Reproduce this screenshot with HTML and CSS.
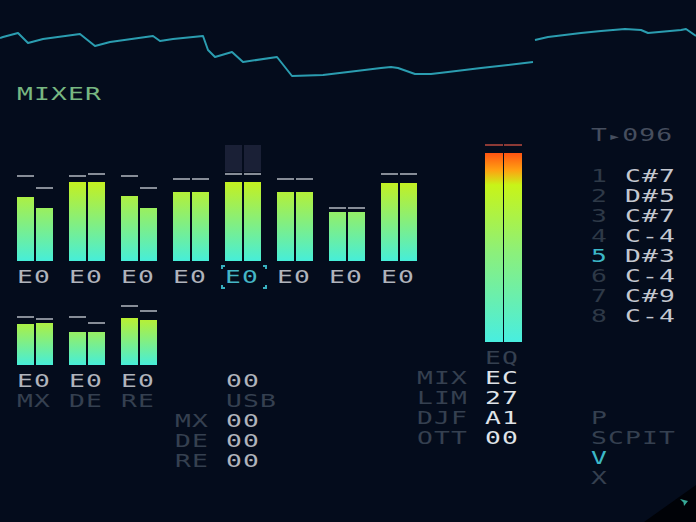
FILE: index.html
```html
<!DOCTYPE html>
<html>
<head>
<meta charset="utf-8">
<title>Mixer</title>
<link rel="stylesheet" href="styles.css">
</head>
<body>
<div class="screen">
  <svg class="scope" width="696" height="80" viewBox="0 0 696 80">
    <polyline points="0,38 3,37 18,33 28,43 43,39 80,34 95,46 110,42 153,36 160,41 173,39 203,36 208,50 215,57 232,52 243,62 277,57 292,76 323,75 348,72 381,68 391,67 398,68 415,74 431,74 448,72 481,68 508,65 533,62"/>
    <polyline points="535,40 548,37 581,33 601,31 625,29 641,30 648,33 681,30 686,29 696,36"/>
  </svg>
  <div class="title">MIXER</div>
  <div class="main">
    <div class="col-ch">
      <div class="chans">
        <div class="ch">
          <div class="meter">
            <div class="mcol"><div class="peak" style="margin-bottom:20px"></div><div class="fill" style="height:64px"></div></div>
            <div class="mcol"><div class="peak" style="margin-bottom:19px"></div><div class="fill" style="height:53px"></div></div>
          </div>
          <div class="lbl">E0</div>
        </div>
        <div class="ch">
          <div class="meter">
            <div class="mcol"><div class="peak" style="margin-bottom:5px"></div><div class="fill" style="height:79px"></div></div>
            <div class="mcol"><div class="peak" style="margin-bottom:7px"></div><div class="fill" style="height:79px"></div></div>
          </div>
          <div class="lbl">E0</div>
        </div>
        <div class="ch">
          <div class="meter">
            <div class="mcol"><div class="peak" style="margin-bottom:19px"></div><div class="fill" style="height:65px"></div></div>
            <div class="mcol"><div class="peak" style="margin-bottom:19px"></div><div class="fill" style="height:53px"></div></div>
          </div>
          <div class="lbl">E0</div>
        </div>
        <div class="ch">
          <div class="meter">
            <div class="mcol"><div class="peak" style="margin-bottom:12px"></div><div class="fill" style="height:69px"></div></div>
            <div class="mcol"><div class="peak" style="margin-bottom:12px"></div><div class="fill" style="height:69px"></div></div>
          </div>
          <div class="lbl">E0</div>
        </div>
        <div class="ch">
          <div class="meter">
            <div class="mcol"><div class="hl"></div><div class="peak" style="margin-bottom:7px"></div><div class="fill" style="height:79px"></div></div>
            <div class="mcol"><div class="hl"></div><div class="peak" style="margin-bottom:7px"></div><div class="fill" style="height:79px"></div></div>
          </div>
          <div class="lbl sel"><span>E0</span></div>
        </div>
        <div class="ch">
          <div class="meter">
            <div class="mcol"><div class="peak" style="margin-bottom:12px"></div><div class="fill" style="height:69px"></div></div>
            <div class="mcol"><div class="peak" style="margin-bottom:12px"></div><div class="fill" style="height:69px"></div></div>
          </div>
          <div class="lbl">E0</div>
        </div>
        <div class="ch">
          <div class="meter">
            <div class="mcol"><div class="peak" style="margin-bottom:3px"></div><div class="fill" style="height:49px"></div></div>
            <div class="mcol"><div class="peak" style="margin-bottom:3px"></div><div class="fill" style="height:49px"></div></div>
          </div>
          <div class="lbl">E0</div>
        </div>
        <div class="ch">
          <div class="meter">
            <div class="mcol"><div class="peak" style="margin-bottom:8px"></div><div class="fill" style="height:78px"></div></div>
            <div class="mcol"><div class="peak" style="margin-bottom:8px"></div><div class="fill" style="height:78px"></div></div>
          </div>
          <div class="lbl">E0</div>
        </div>
      </div>

      <div class="lower">
        <div class="ch sm">
          <div class="meter">
            <div class="mcol"><div class="peak" style="margin-bottom:6px"></div><div class="fill" style="height:41px"></div></div>
            <div class="mcol"><div class="peak" style="margin-bottom:3px"></div><div class="fill" style="height:42px"></div></div>
          </div>
          <div class="lbl">E0</div>
          <div class="lbl dim">MX</div>
        </div>
        <div class="ch sm">
          <div class="meter">
            <div class="mcol"><div class="peak" style="margin-bottom:14px"></div><div class="fill" style="height:33px"></div></div>
            <div class="mcol"><div class="peak" style="margin-bottom:8px"></div><div class="fill" style="height:33px"></div></div>
          </div>
          <div class="lbl">E0</div>
          <div class="lbl dim">DE</div>
        </div>
        <div class="ch sm">
          <div class="meter">
            <div class="mcol"><div class="peak" style="margin-bottom:11px"></div><div class="fill" style="height:47px"></div></div>
            <div class="mcol"><div class="peak" style="margin-bottom:8px"></div><div class="fill" style="height:45px"></div></div>
          </div>
          <div class="lbl">E0</div>
          <div class="lbl dim">RE</div>
        </div>
        <div class="usb">
          <div class="row"><span class="k"></span><span class="v">00</span></div>
          <div class="row"><span class="k"></span><span class="v dim">USB</span></div>
          <div class="row"><span class="k dim">MX</span><span class="v">00</span></div>
          <div class="row"><span class="k dim">DE</span><span class="v">00</span></div>
          <div class="row"><span class="k dim">RE</span><span class="v">00</span></div>
        </div>
      </div>
    </div>

    <div class="col-master">
      <div class="master">
        <div class="meter">
          <div class="mcol"><div class="peak red" style="margin-bottom:7px"></div><div class="fill" style="height:189px"></div></div>
          <div class="mcol"><div class="peak red" style="margin-bottom:7px"></div><div class="fill" style="height:189px"></div></div>
        </div>
        <div class="lbl dim">EQ</div>
      </div>
      <div class="fx">
        <div class="row"><span class="k dim">MIX</span><span class="v hi">EC</span></div>
        <div class="row"><span class="k dim">LIM</span><span class="v hi">27</span></div>
        <div class="row"><span class="k dim">DJF</span><span class="v hi">A1</span></div>
        <div class="row"><span class="k dim">OTT</span><span class="v hi">00</span></div>
      </div>
    </div>

    <div class="col-right">
      <div class="tempo">T<span class="tri">▸</span>096</div>
      <div class="notes">
        <div class="row"><span class="k num">1</span><span class="v note">C#7</span></div>
        <div class="row"><span class="k num">2</span><span class="v note">D#5</span></div>
        <div class="row"><span class="k num">3</span><span class="v note">C#7</span></div>
        <div class="row"><span class="k num">4</span><span class="v note">C-4</span></div>
        <div class="row"><span class="k num cur">5</span><span class="v note">D#3</span></div>
        <div class="row"><span class="k num">6</span><span class="v note">C-4</span></div>
        <div class="row"><span class="k num">7</span><span class="v note">C#9</span></div>
        <div class="row"><span class="k num">8</span><span class="v note">C-4</span></div>
      </div>
      <div class="opts">
        <div class="opt dim">P</div>
        <div class="opt dim">SCPIT</div>
        <div class="opt cur">V</div>
        <div class="opt dim">X</div>
      </div>
    </div>
  </div>

  <svg class="corner" width="56" height="40" viewBox="640 482 56 40">
    <polygon points="644,522 696,485 696,522" fill="#000207"/>
    <path d="M680 499 L688 501 L684 506 L683.5 502.5 Z" fill="#36a896"/>
  </svg>
</div>
</body>
</html>
```

FILE: styles.css
```css
* { box-sizing: border-box; }

html, body {
  margin: 0;
  padding: 0;
  background: #040c1c;
}

body {
  width: 696px;
  height: 522px;
  overflow: hidden;
  font-family: "DejaVu Sans Mono", monospace;
  font-size: 17px;
  line-height: 20px;
  letter-spacing: 0.74px;
  color: #b0b4bc;
}

.screen {
  position: relative;
  width: 696px;
  height: 522px;
  overflow: hidden;
}

/* wide pixel-style lettering: glyphs stretched to a 17px cell */
.title,
.lbl:not(.sel),
.sel span,
.k,
.v,
.tempo,
.opt {
  transform: scaleX(1.55);
  transform-origin: 0 50%;
}

.scope { display: block; }
.scope polyline {
  fill: none;
  stroke: #2b9db0;
  stroke-width: 2;
  stroke-linejoin: round;
}

.title {
  margin: 4px 0 0 17px;
  width: max-content;
  height: 20px;
  color: #78b882;
}

.main {
  display: flex;
  height: 418px;
}

/* channel area */
.col-ch {
  margin-left: 17px;
  width: 400px;
  flex: none;
}

.chans {
  display: flex;
  gap: 16px;
}

.ch {
  width: 36px;
  display: flex;
  flex-direction: column;
  flex: none;
}

.meter {
  display: flex;
  gap: 2px;
  height: 157px;
}

.mcol {
  flex: 1;
  display: flex;
  flex-direction: column;
  justify-content: flex-end;
}

.peak {
  flex: none;
  height: 2px;
  background: #878d97;
}

.peak.red { background: #8c3a36; }

.hl {
  flex: none;
  height: 27px;
  margin-bottom: 1px;
  background: #1a2036;
}

.fill {
  flex: none;
  background: linear-gradient(to top, #46eed9 0, #c6f01e 80px);
}

.lbl {
  margin-top: 6px;
  width: max-content;
  height: 20px;
  white-space: nowrap;
}

.lbl + .lbl { margin-top: 0; }

.sel {
  width: auto;
  color: #45b6c6;
  margin: 4px -6px 0 -4px;
  padding: 2px 6px 2px 4px;
  height: 24px;
  background:
    linear-gradient(#38b0c0, #38b0c0) left top / 4px 2px no-repeat,
    linear-gradient(#38b0c0, #38b0c0) left top / 2px 4px no-repeat,
    linear-gradient(#38b0c0, #38b0c0) right top / 4px 2px no-repeat,
    linear-gradient(#38b0c0, #38b0c0) right top / 2px 4px no-repeat,
    linear-gradient(#38b0c0, #38b0c0) left bottom / 4px 2px no-repeat,
    linear-gradient(#38b0c0, #38b0c0) left bottom / 2px 4px no-repeat,
    linear-gradient(#38b0c0, #38b0c0) right bottom / 4px 2px no-repeat,
    linear-gradient(#38b0c0, #38b0c0) right bottom / 2px 4px no-repeat;
}

.sel span {
  display: block;
  width: max-content;
}

.lower {
  display: flex;
  align-items: flex-start;
  gap: 16px;
}

.sm .meter { height: 76px; }
.sm .fill {
  background: linear-gradient(to top, #46eed9 0, #c6f01e 52px);
}

.usb {
  margin: 82px 0 0 2px;
}

.row {
  display: flex;
  height: 20px;
  white-space: nowrap;
}

.k {
  display: block;
  flex: none;
}

.usb .k { width: 33px; }
.usb .v { margin-left: 18px; }

.v { display: block; }

.dim { color: #354050; }
.hi { color: #dfe3e8; }

/* master */
.col-master {
  width: 174px;
  flex: none;
}

.master {
  margin-left: 68px;
  width: 37px;
  display: flex;
  flex-direction: column;
}

.master .meter {
  height: 238px;
  gap: 1px;
}

.master .fill {
  background: linear-gradient(to top, #48eee0 0, #8cf07a 90px, #c8f418 157px, #ffa012 172px, #ff5412 189px);
}

.fx .k { width: 34px; }
.fx .v { margin-left: 34px; }

/* right column */
.col-right {
  width: 105px;
  flex: none;
}

.tempo {
  margin-top: 21px;
  width: max-content;
  height: 20px;
  color: #464e5e;
  white-space: nowrap;
}

.tri { font-size: 14px; }

.notes { margin-top: 21px; }
.notes .k { width: 17px; }
.notes .v { margin-left: 17px; }
.num { color: #2e3947; }
.note { color: #c4c8d0; }

.cur { color: #3cb8c8; }

.opts { margin-top: 82px; }

.opt {
  width: max-content;
  height: 20px;
  white-space: nowrap;
}

.corner {
  position: absolute;
  right: 0;
  bottom: 0;
}
```
